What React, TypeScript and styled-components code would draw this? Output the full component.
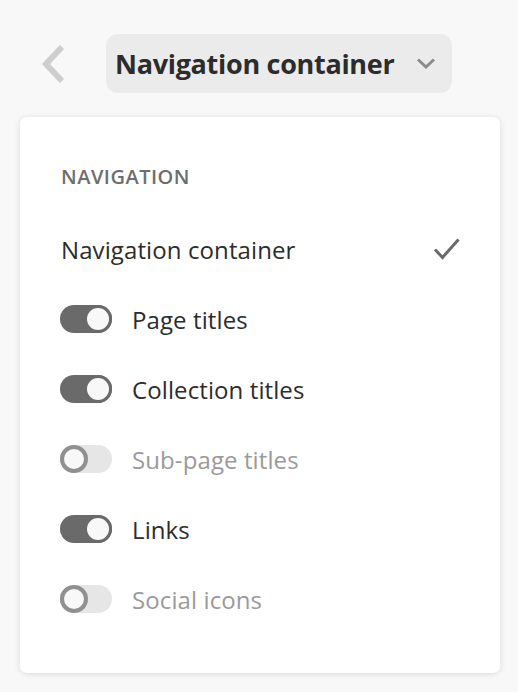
import styled, { createGlobalStyle } from 'styled-components';

const GlobalStyle = createGlobalStyle`
	html, body {
		margin: 0;
		padding: 0;
		background: #f8f8f8;
	}
	body {
		font-family: 'Open Sans', 'Noto Sans', sans-serif;
		color: #2c2c2c;
	}
`;

interface Item {
	label: string;
	on: boolean;
}

const items: Item[] = [
	{ label: 'Page titles', on: true },
	{ label: 'Collection titles', on: true },
	{ label: 'Sub-page titles', on: false },
	{ label: 'Links', on: true },
	{ label: 'Social icons', on: false },
];

const App = () => {
	return (
		<Page>
			<GlobalStyle />
			<Header>
				<BackButton aria-label='back'>
					<svg width='26' height='40' viewBox='0 0 26 40'>
						<path
							d='M22 3 L6 20 L22 37'
							fill='none'
							stroke='#cecece'
							strokeWidth='6'
						/>
					</svg>
				</BackButton>
				<Picker>
					<span>Navigation container</span>
					<svg width='20' height='13' viewBox='0 0 20 13'>
						<path
							d='M2 2.5 L10 10 L18 2.5'
							fill='none'
							stroke='#8c8c8c'
							strokeWidth='3'
						/>
					</svg>
				</Picker>
			</Header>
			<Card>
				<SectionTitle>NAVIGATION</SectionTitle>
				<SelectedRow>
					<span>Navigation container</span>
					<svg width='28' height='24' viewBox='0 0 28 24'>
						<path
							d='M2 12.5 L9.5 20.5 L25.5 2.5'
							fill='none'
							stroke='#6a6a6a'
							strokeWidth='3'
						/>
					</svg>
				</SelectedRow>
				{items.map((item) => (
					<ToggleRow key={item.label}>
						<Switch on={item.on}>
							<Knob on={item.on} />
						</Switch>
						<Label on={item.on}>{item.label}</Label>
					</ToggleRow>
				))}
			</Card>
		</Page>
	);
};
export default App;

const Page = styled.div`
	width: 518px;
	height: 692px;
	padding: 34px 18px 0 20px;
	box-sizing: border-box;
	display: flex;
	flex-direction: column;
	gap: 24px;
`;

const Header = styled.div`
	display: flex;
	align-items: center;
	height: 59px;
	padding-left: 20px;
	gap: 40px;
`;

const BackButton = styled.div`
	display: flex;
	align-items: center;
	width: 26px;
	height: 40px;
`;

const Picker = styled.div`
	display: flex;
	align-items: center;
	justify-content: space-between;
	width: 346px;
	height: 59px;
	box-sizing: border-box;
	padding: 0 16px 0 9px;
	background: #ebebeb;
	border-radius: 12px;
	span {
		font-size: 27px;
		font-weight: 700;
		letter-spacing: -0.3px;
		color: #2c2c2c;
	}
`;

const Card = styled.div`
	width: 480px;
	height: 556px;
	box-sizing: border-box;
	padding: 45px 40px 0 41px;
	background: #ffffff;
	border-radius: 7px;
	box-shadow: 0 1px 6px rgba(0, 0, 0, 0.12);
	display: flex;
	flex-direction: column;
`;

const SectionTitle = styled.div`
	height: 30px;
	line-height: 30px;
	font-size: 20px;
	font-weight: 600;
	color: #6e6e6e;
	letter-spacing: 0.5px;
	margin-bottom: 22px;
`;

const SelectedRow = styled.div`
	display: flex;
	align-items: center;
	justify-content: space-between;
	height: 70px;
	span {
		font-size: 24px;
		letter-spacing: 0.1px;
		color: #2c2c2c;
	}
	svg {
		margin-right: -1px;
	}
`;

const ToggleRow = styled.div`
	display: flex;
	align-items: center;
	gap: 20px;
	height: 70px;
	margin-left: -1px;
`;

const Switch = styled.div<{ on: boolean }>`
	position: relative;
	width: 52px;
	height: 28px;
	border-radius: 14px;
	background: ${(p) => (p.on ? '#6a6a6a' : '#e6e6e6')};
	flex-shrink: 0;
`;

const Knob = styled.div<{ on: boolean }>`
	position: absolute;
	top: 0;
	left: ${(p) => (p.on ? '24px' : '0')};
	width: 28px;
	height: 28px;
	box-sizing: border-box;
	border-radius: 50%;
	background: #f8f8f8;
	border: ${(p) => (p.on ? '3px solid #6a6a6a' : '4px solid #909090')};
`;

const Label = styled.span<{ on: boolean }>`
	font-size: 24px;
	letter-spacing: 0.1px;
	color: ${(p) => (p.on ? '#2c2c2c' : '#9a9a9a')};
`;
